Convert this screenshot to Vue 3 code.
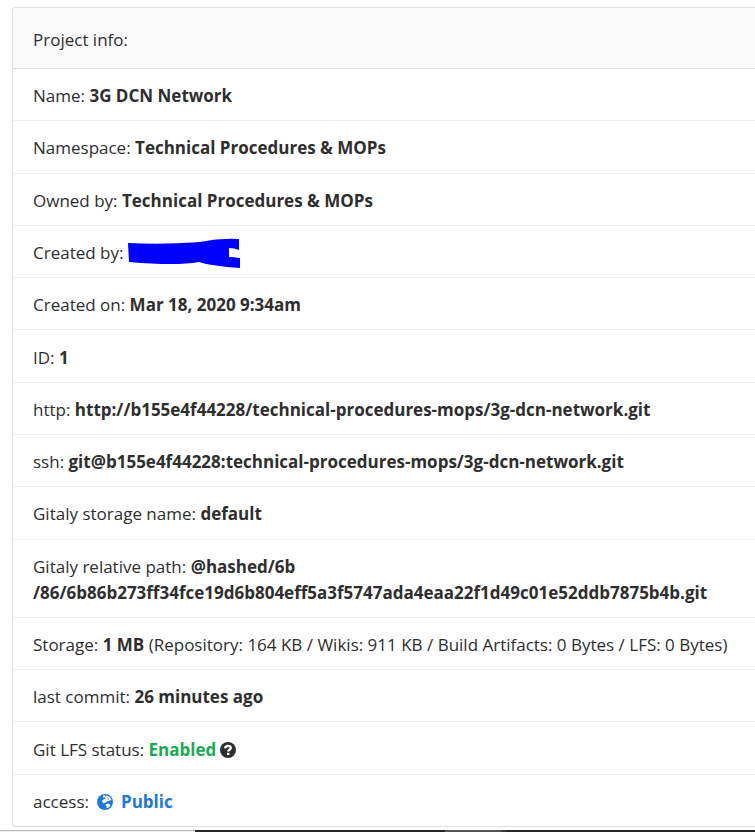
<script setup>
const before = [
  { label: 'Name:', value: '3G DCN Network' },
  { label: 'Namespace:', value: 'Technical Procedures & MOPs' },
  { label: 'Owned by:', value: 'Technical Procedures & MOPs' },
  { label: 'Created by:', redacted: true },
  { label: 'Created on:', value: 'Mar 18, 2020 9:34am' },
  { label: 'ID:', value: '1' },
  { label: 'http:', value: 'http://b155e4f44228/technical-procedures-mops/3g-dcn-network.git' },
  { label: 'ssh:', value: 'git@b155e4f44228:technical-procedures-mops/3g-dcn-network.git' },
  { label: 'Gitaly storage name:', value: 'default' },
]
</script>

<template>
  <div class="page">
    <section class="card">
      <h1 class="card-header">Project info:</h1>
      <ul class="rows">
        <li v-for="row in before" :key="row.label" class="row">
          <div>
            {{ row.label }}
            <svg v-if="row.redacted" class="scribble" viewBox="0 0 112 32" aria-hidden="true">
              <path d="M0 5 Q34 7 72 4 Q91 0 111 1 V12 Q106 10 101 10 V19 Q106 19 112 20 V30 Q84 28 71 24 Q48 28 1 24 Z" />
            </svg>
            <strong v-else>{{ row.value }}</strong>
          </div>
        </li>
        <li class="row">
          <div>
            Gitaly relative path:
            <strong>@hashed/6b<wbr /><span class="path-tail">/86/6b86b273ff34fce19d6b804eff5a3f5747ada4eaa22f1d49c01e52ddb7875b4b.git</span></strong>
          </div>
        </li>
        <li class="row">
          <div>
            Storage: <strong>1 MB</strong>
            (Repository: 164 KB / Wikis: 911 KB / Build Artifacts: 0 Bytes / LFS: 0 Bytes)
          </div>
        </li>
        <li class="row">
          <div>last commit: <strong>26 minutes ago</strong></div>
        </li>
        <li class="row">
          <div>
            Git LFS status: <strong class="enabled">Enabled</strong>
            <a class="help" href="#" aria-label="Git LFS help">
              <svg class="icon" viewBox="0 0 16 16" aria-hidden="true">
                <circle cx="8" cy="8" r="8" fill="currentColor" />
                <path d="M5 6.4C5.3 4.5 6.4 3.8 8 3.8C9.7 3.8 10.8 4.7 10.8 6C10.8 7.7 8.2 7.7 8.2 9.6" fill="none" stroke="#fff" stroke-width="2.3" />
                <path d="M7 10.8h2.4v2.2H7z" fill="#fff" />
              </svg>
            </a>
          </div>
        </li>
        <li class="row">
          <div class="access">
            <span>access:</span>
            <svg class="icon globe" viewBox="0 0 16 16" aria-hidden="true">
              <circle cx="8" cy="8" r="8" fill="currentColor" />
              <path d="M6 1.6L8 1.2L8.6 2.4L10 1.6L12.4 2.8L14 4.8L14.4 6.6L13 6L12 7.2L10.4 7L9.4 8.2L8 8.4L7 9.4L5.6 8.6L5 7L6.2 5.6L8 5L8.8 4L7.4 3.4L6.2 3.8Z" fill="#fff" />
              <path d="M9 10.2L10.8 9.4L12.8 10.2L13.4 11.4L11.8 13.2L9.8 14.2L9.6 12.4L8.6 11.4Z" fill="#fff" />
              <path d="M10.8 4.2L12 4.4L11.6 5.4L10.4 5.4Z" fill="currentColor" />
            </svg>
            <strong>Public</strong>
          </div>
        </li>
      </ul>
    </section>
    <div class="edge" aria-hidden="true">
      <span class="edge-light"></span>
      <span class="edge-dark"></span>
      <span class="edge-tab"></span>
      <span class="edge-dark edge-rest"></span>
    </div>
  </div>
</template>

<style>
body {
  background: #fff;
}
</style>

<style scoped>
.page {
  box-sizing: border-box;
  display: flex;
  flex-direction: column;
  min-height: 100vh;
  padding-top: 7px;
  color: #2e2e2e;
  font-family: "Segoe UI", "Open Sans", "Noto Sans", sans-serif;
  font-size: 17px;
  line-height: 26px;
}
.card {
  flex: 1;
  display: flex;
  flex-direction: column;
  margin: 0 0 3px 12px;
  border: 1px solid #dfdfdf;
  border-right: 0;
  border-radius: 4px 0 0 4px;
  overflow: hidden;
}
.card-header {
  margin: 0;
  padding: 19px 20px 15px;
  background: #fafafa;
  border-bottom: 1px solid #dfdfdf;
  font-size: inherit;
  font-weight: 400;
}
.rows {
  flex: 1;
  display: flex;
  flex-direction: column;
  margin: 0;
  padding: 0;
  list-style: none;
}
.row {
  flex: 1 0 auto;
  display: flex;
  align-items: center;
  padding: 14px 20px 11px;
  border-bottom: 1px solid #eee;
}
.row:last-child {
  border-bottom: 0;
}
strong {
  font-weight: 700;
}
.path-tail {
  white-space: nowrap;
}
.scribble {
  width: 112px;
  height: 32px;
  margin: -6px 0;
  vertical-align: middle;
  fill: #00f;
}
.icon {
  width: 16px;
  height: 16px;
  vertical-align: -2px;
}
.enabled {
  color: #1aaa55;
}
.help {
  margin-left: 4px;
  color: inherit;
}
.access {
  display: flex;
  align-items: center;
  gap: 8px;
}
.access strong,
.globe {
  color: #1f78d1;
}
.edge {
  display: flex;
  height: 2px;
}
.edge-light {
  box-sizing: border-box;
  width: 195px;
  background: #f0f0f0;
  border-top: 1px solid #bbb;
}
.edge-dark {
  width: 250px;
  background: #262628;
}
.edge-tab {
  box-sizing: border-box;
  width: 61px;
  background: #555;
  border-right: 5px solid #3a3a3a;
}
.edge-rest {
  flex: 1;
}
</style>
